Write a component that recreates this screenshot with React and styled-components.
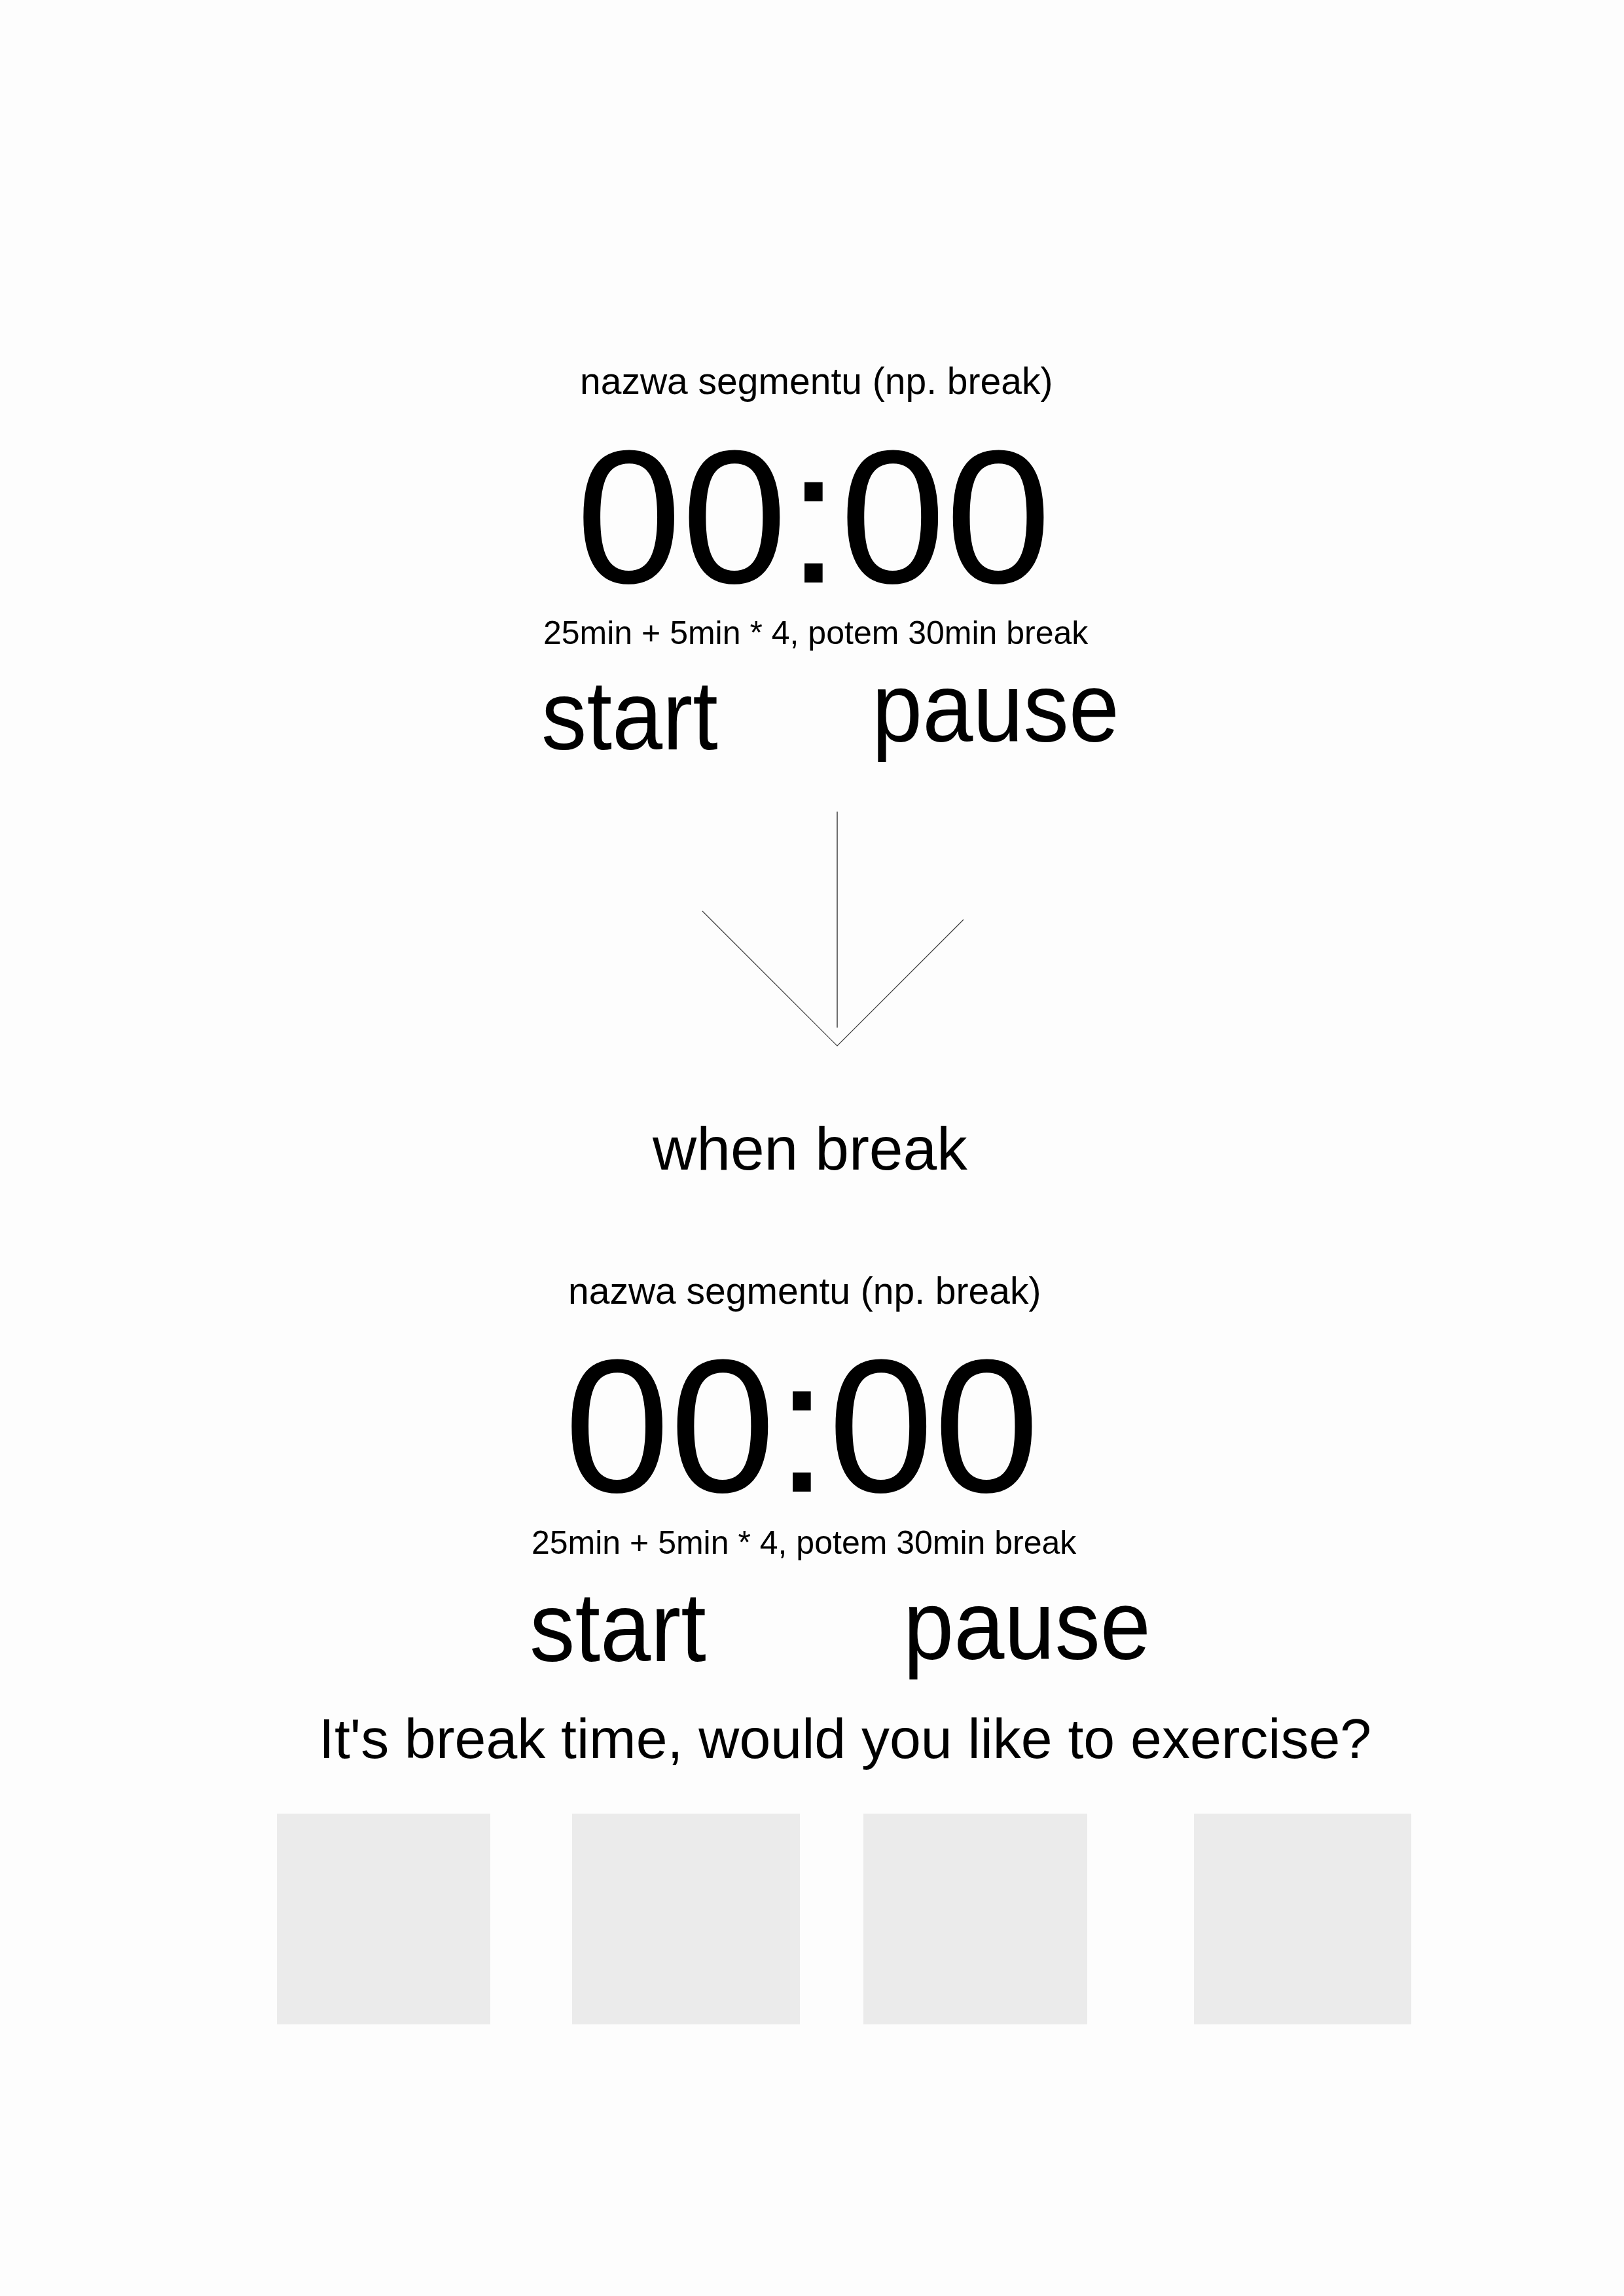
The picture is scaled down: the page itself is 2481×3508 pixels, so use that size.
import React from "react";
import styled, { createGlobalStyle } from "styled-components";

const GlobalStyle = createGlobalStyle`
  html, body {
    margin: 0;
    padding: 0;
    background: #fdfdfd;
  }
  body {
    font-family: "Liberation Sans", Arial, sans-serif;
    color: #000;
  }
`;

const Page = styled.main`
  width: 2481px;
  height: 3508px;
  overflow: hidden;
  box-sizing: border-box;
  padding-top: 553.75px;
  display: flex;
  flex-direction: column;
  align-items: flex-start;
  background: #fdfdfd;
  font-family: "Liberation Sans", Arial, sans-serif;
`;

const TimerBlock = styled.section`
  display: flex;
  flex-direction: column;
  align-items: flex-start;
  margin-left: ${(p) => p.$left}px;
  margin-top: ${(p) => p.$top}px;
`;

const SegmentLabel = styled.div`
  font-size: 57px;
  line-height: 1;
  margin-left: 59px;
  white-space: nowrap;
`;

const Clock = styled.div`
  font-size: 290px;
  line-height: 1;
  margin-top: 32.75px;
  margin-left: 53px;
  white-space: nowrap;
`;

const Schedule = styled.div`
  font-size: 50px;
  line-height: 1;
  margin-top: 8.2px;
  margin-left: 3px;
  white-space: nowrap;
`;

const Controls = styled.div`
  display: grid;
  grid-template-columns: ${(p) => p.$pauseX}px auto;
  align-items: start;
  margin-top: ${(p) => p.$gap}px;
`;

const Action = styled.div`
  font-size: 150px;
  line-height: 1;
  white-space: nowrap;
  transform: scaleX(0.925);
  transform-origin: left top;
  margin-top: ${(p) => p.$drop || 0}px;
`;

const Arrow = styled.svg`
  display: block;
  margin-left: 1070px;
  margin-top: 70px;
`;

const Transition = styled.div`
  font-size: 93px;
  line-height: 1;
  margin-left: 997px;
  margin-top: 109.3px;
  white-space: nowrap;
`;

const Prompt = styled.div`
  font-size: 86px;
  line-height: 1;
  margin-left: 487px;
  margin-top: 52px;
  white-space: nowrap;
`;

const Tiles = styled.div`
  display: flex;
  align-items: flex-start;
  margin-top: 72px;
`;

const Tile = styled.div`
  width: ${(p) => p.$w}px;
  height: 322px;
  margin-left: ${(p) => p.$gap}px;
  background: #ebebeb;
`;

const tiles = [
  { w: 326, gap: 423 },
  { w: 348, gap: 125 },
  { w: 342, gap: 97 },
  { w: 332, gap: 163 },
];

function Timer({ left, top, pauseX, gap, startDrop }) {
  return (
    <TimerBlock $left={left} $top={top}>
      <SegmentLabel>nazwa segmentu (np. break)</SegmentLabel>
      <Clock>00:00</Clock>
      <Schedule>25min + 5min * 4, potem 30min break</Schedule>
      <Controls $pauseX={pauseX} $gap={gap}>
        <Action $drop={startDrop}>start</Action>
        <Action>pause</Action>
      </Controls>
    </TimerBlock>
  );
}

export default function App() {
  return (
    <>
      <GlobalStyle />
      <Page>
        <Timer left={827} top={0} pauseX={505} gap={14.3} startDrop={12} />
        <Arrow width="405" height="362" viewBox="0 0 405 362">
          <line x1="209" y1="2" x2="209" y2="332" stroke="#5e5e5e" strokeWidth="1.8" />
          <polyline
            points="3,154 209,360 402,167"
            fill="none"
            stroke="#3a3a3a"
            strokeWidth="1.2"
          />
        </Arrow>
        <Transition>when break</Transition>
        <Timer left={809} top={141.45} pauseX={571} gap={26.3} startDrop={3} />
        <Prompt>It's break time, would you like to exercise?</Prompt>
        <Tiles>
          {tiles.map((t, i) => (
            <Tile key={i} $w={t.w} $gap={t.gap} />
          ))}
        </Tiles>
      </Page>
    </>
  );
}
